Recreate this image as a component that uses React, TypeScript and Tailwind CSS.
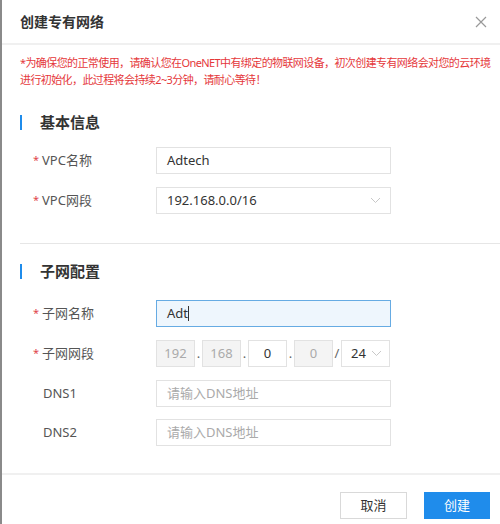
const font = { fontFamily: '"Noto Sans", "Noto Sans CJK SC", sans-serif' };

const Chevron = () => (
  <svg width="11" height="7" viewBox="0 0 11 7" className="shrink-0">
    <path d="M1 1 L5.5 5.5 L10 1" fill="none" stroke="#c8c8c8" strokeWidth="1" />
  </svg>
);

const SectionTitle = ({ title }: { title: string }) => (
  <div className="flex items-center h-[20px]">
    <div className="w-[2px] h-[15px] bg-[#1f8ceb] ml-[18px]"></div>
    <span className="ml-[18px] text-[15px] font-bold text-[#333] leading-[20px]">{title}</span>
  </div>
);

const Row = ({ label, required, children, className = '' }: { label: string; required?: boolean; children: React.ReactNode; className?: string }) => (
  <div className={`flex items-center h-[27px] ${className}`}>
    <div className="w-[154px] flex items-center text-[13px] text-[#555]">
      {required ? (
        <>
          <span className="ml-[31px] w-[9px] text-[#e0464b] text-[11px]">*</span>
          <span>{label}</span>
        </>
      ) : (
        <span className="ml-[41px]">{label}</span>
      )}
    </div>
    {children}
  </div>
);

export default function App() {
  return (
    <div className="w-[500px] h-[524px] bg-white border-l-2 border-[#8a8a8a] flex flex-col" style={font}>
      {/* Header */}
      <div className="h-[45px] shrink-0 border-b-2 border-[#f0f0f0] flex items-center justify-between pl-[18px] pr-[13px]">
        <span className="text-[14px] font-bold text-[#333]">创建专有网络</span>
        <svg width="12" height="12" viewBox="0 0 12 12">
          <path d="M1 1 L11 11 M11 1 L1 11" stroke="#999" strokeWidth="1.2" fill="none" />
        </svg>
      </div>

      {/* Notice */}
      <div className="pt-[9px] pl-[18px] text-[11px] tracking-[-0.6px] leading-[17px] text-[#e5383b] whitespace-nowrap">
        <div>*为确保您的正常使用，请确认您在OneNET中有绑定的物联网设备，初次创建专有网络会对您的云环境</div>
        <div>进行初始化，此过程将会持续2~3分钟，请耐心等待！</div>
      </div>

      {/* Basic info */}
      <div className="mt-[24px]">
        <SectionTitle title="基本信息" />
      </div>
      <Row label="VPC名称" required className="mt-[15px]">
        <div className="w-[235px] h-[27px] border border-[#e2e2e2] flex items-center px-[10px] text-[13px] text-[#333]">Adtech</div>
      </Row>
      <Row label="VPC网段" required className="mt-[13px]">
        <div className="w-[235px] h-[27px] border border-[#e2e2e2] flex items-center justify-between pl-[10px] pr-[9px] text-[13px] text-[#333]">
          <span>192.168.0.0/16</span>
          <Chevron />
        </div>
      </Row>

      <div className="mt-[29px] ml-[18px] h-px bg-[#e6e6e6]"></div>

      {/* Subnet */}
      <div className="mt-[17px]">
        <SectionTitle title="子网配置" />
      </div>
      <Row label="子网名称" required className="mt-[19px]">
        <div className="w-[235px] h-[27px] border border-[#66abe3] bg-[#eef6fd] flex items-center px-[10px] text-[13px] text-[#333]">
          <span>Adt</span>
          <span className="w-px h-[15px] bg-[#333]"></span>
        </div>
      </Row>
      <Row label="子网网段" required className="mt-[13px]">
        <div className="flex items-center text-[13px]">
          <div className="w-[39px] h-[27px] border border-[#e2e2e2] bg-[#f4f4f4] text-[#aaa] flex items-center justify-center">192</div>
          <span className="w-[7px] text-center text-[#666]">.</span>
          <div className="w-[39px] h-[27px] border border-[#e2e2e2] bg-[#f4f4f4] text-[#aaa] flex items-center justify-center">168</div>
          <span className="w-[7px] text-center text-[#666]">.</span>
          <div className="w-[39px] h-[27px] border border-[#e2e2e2] bg-white text-[#333] flex items-center justify-center">0</div>
          <span className="w-[7px] text-center text-[#666]">.</span>
          <div className="w-[39px] h-[27px] border border-[#e2e2e2] bg-[#f4f4f4] text-[#aaa] flex items-center justify-center">0</div>
          <span className="w-[8px] text-center text-[#666]">/</span>
          <div className="w-[49px] h-[27px] border border-[#e2e2e2] bg-white text-[#333] flex items-center justify-between pl-[9px] pr-[7px]">
            <span>24</span>
            <Chevron />
          </div>
        </div>
      </Row>
      <Row label="DNS1" className="mt-[13px]">
        <div className="w-[235px] h-[27px] border border-[#e2e2e2] flex items-center px-[10px] text-[13px] text-[#aaa]">请输入DNS地址</div>
      </Row>
      <Row label="DNS2" className="mt-[12px]">
        <div className="w-[235px] h-[27px] border border-[#e2e2e2] flex items-center px-[10px] text-[13px] text-[#aaa]">请输入DNS地址</div>
      </Row>

      <div className="flex-1"></div>

      {/* Footer */}
      <div className="h-[51px] shrink-0 border-t-2 border-[#f0f0f0] flex items-start justify-end pt-[17px] pr-[10px] gap-[17px]">
        <button className="w-[67px] h-[27px] border border-[#d9d9d9] bg-white text-[13px] text-[#333]">取消</button>
        <button className="w-[66px] h-[27px] bg-[#1f8ceb] text-[13px] text-white">创建</button>
      </div>
    </div>
  );
}
